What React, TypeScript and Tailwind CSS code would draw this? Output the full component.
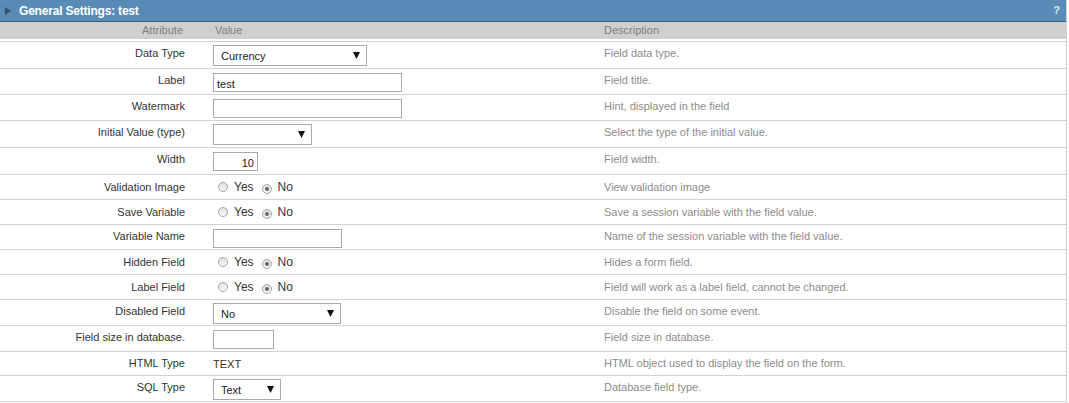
import React from 'react';

type Row = {
  label: string;
  desc: string;
  h: string;
  kind: 'select' | 'input' | 'radio' | 'text';
  value?: string;
  w?: string;
  right?: boolean;
};

const rows: Row[] = [
  { label: 'Data Type', desc: 'Field data type.', h: 'h-[27px]', kind: 'select', value: 'Currency', w: 'w-[154px]' },
  { label: 'Label', desc: 'Field title.', h: 'h-[26px]', kind: 'input', value: 'test', w: 'w-[189px]' },
  { label: 'Watermark', desc: 'Hint, displayed in the field', h: 'h-[26px]', kind: 'input', value: '', w: 'w-[189px]' },
  { label: 'Initial Value (type)', desc: 'Select the type of the initial value.', h: 'h-[27px]', kind: 'select', value: '', w: 'w-[99px]' },
  { label: 'Width', desc: 'Field width.', h: 'h-[27px]', kind: 'input', value: '10', w: 'w-[45px]', right: true },
  { label: 'Validation Image', desc: 'View validation image', h: 'h-[25px]', kind: 'radio' },
  { label: 'Save Variable', desc: 'Save a session variable with the field value.', h: 'h-[25px]', kind: 'radio' },
  { label: 'Variable Name', desc: 'Name of the session variable with the field value.', h: 'h-[25px]', kind: 'input', value: '', w: 'w-[129px]' },
  { label: 'Hidden Field', desc: 'Hides a form field.', h: 'h-[25px]', kind: 'radio' },
  { label: 'Label Field', desc: 'Field will work as a label field, cannot be changed.', h: 'h-[25px]', kind: 'radio' },
  { label: 'Disabled Field', desc: 'Disable the field on some event.', h: 'h-[26px]', kind: 'select', value: 'No', w: 'w-[128px]' },
  { label: 'Field size in database.', desc: 'Field size in database.', h: 'h-[26px]', kind: 'input', value: '', w: 'w-[61px]' },
  { label: 'HTML Type', desc: 'HTML object used to display the field on the form.', h: 'h-[24px]', kind: 'text', value: 'TEXT' },
  { label: 'SQL Type', desc: 'Database field type.', h: 'h-[26px]', kind: 'select', value: 'Text', w: 'w-[68px]' },
];

const Radio = ({ checked }: { checked?: boolean }) => (
  <span className="inline-flex w-[10px] h-[10px] rounded-full border border-[#a5a5a5] bg-gradient-to-b from-[#e0e0e0] to-[#f8f8f8] items-center justify-center">
    {checked && <span className="w-[4px] h-[4px] rounded-full bg-[#666]" />}
  </span>
);

const Control = ({ row }: { row: Row }) => {
  if (row.kind === 'select') {
    return (
      <div className={`${row.w} h-[21px] mt-[3px] border border-[#a9a9a9] bg-white flex items-center justify-between pl-[7px] pr-[6px] pt-[2px] text-[11px] text-[#222]`}>
        <span>{row.value}</span>
        <svg width="7" height="7" viewBox="0 0 7 7" className="-mt-[2px]">
          <polygon points="0,0 7,0 3.5,7" fill="#111" />
        </svg>
      </div>
    );
  }
  if (row.kind === 'input') {
    return (
      <input
        readOnly
        value={row.value}
        className={`${row.w} h-[19px] mt-[4px] border border-[#a9a9a9] bg-white px-[3px] pt-[2px] text-[11px] text-[#222] outline-none ${row.right ? 'text-right' : ''}`}
      />
    );
  }
  if (row.kind === 'radio') {
    return (
      <div className="flex items-center h-full pl-[5px] text-[12px] text-[#333]">
        <Radio />
        <span className="ml-[6px]">Yes</span>
        <span className="ml-[8px]"><Radio checked /></span>
        <span className="ml-[6px]">No</span>
      </div>
    );
  }
  return <div className="pt-[4px] text-[11px] text-[#333]">{row.value}</div>;
};

export default function App() {
  return (
    <div className="w-[1069px] h-[403px] bg-white overflow-hidden" style={{ fontFamily: '"Liberation Sans", Arial, sans-serif' }}>
      <div className="w-[1067px] border-r border-[#d0d0d0]">
        <div className="h-[22px] bg-[#588cb6] border-b border-[#3f5f7c] flex items-center justify-between pl-[5px] pr-[6px]">
          <div className="flex items-center">
            <svg width="6" height="8" viewBox="0 0 6 8">
              <polygon points="0,0 6,4 0,8" fill="#3e4e5e" />
            </svg>
            <span className="ml-[8px] text-[12px] font-bold text-white tracking-[-0.2px]">General Settings: test</span>
          </div>
          <span className="text-[11px] font-bold text-[#dfe8f1]">?</span>
        </div>
        <div className="h-[19px] bg-[#cfcfcf] grid grid-cols-[200px_404px_1fr] items-center text-[11px] text-[#7e7e7e] border-b-2 border-white">
          <div className="text-right pr-[17px]">Attribute</div>
          <div className="pl-[15px]">Value</div>
          <div>Description</div>
        </div>
        {rows.map((row) => (
          <div key={row.label} className={`${row.h} border-t border-[#d3d3d3] grid grid-cols-[200px_404px_1fr] text-[11px]`}>
            <div className={`text-right pr-[15px] text-[#333] ${row.kind === 'radio' ? 'flex items-center justify-end' : 'pt-[3px]'}`}>{row.label}</div>
            <div className="pl-[13px]">
              <Control row={row} />
            </div>
            <div className={`text-[#8c8c8c] ${row.kind === 'radio' ? 'flex items-center' : 'pt-[3px]'}`}>{row.desc}</div>
          </div>
        ))}
        <div className="border-t border-[#d3d3d3]" />
      </div>
    </div>
  );
}
